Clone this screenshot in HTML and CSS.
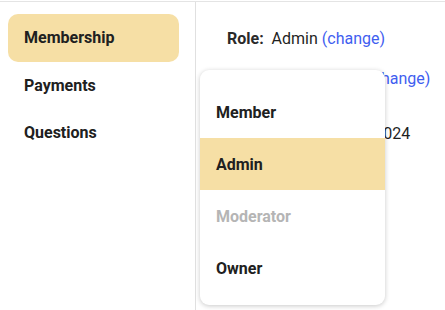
FILE: index.html
```html
<!DOCTYPE html>
<html lang="en">
<head>
    <meta charset="UTF-8">
    <meta name="viewport" content="width=device-width, initial-scale=1.0">
    <title>Membership</title>
    <link rel="stylesheet" href="styles.css">
</head>
<body>
    <div class="layout">
        <nav class="sidebar">
            <a class="nav-item active">Membership</a>
            <a class="nav-item">Payments</a>
            <a class="nav-item">Questions</a>
        </nav>

        <main class="content">
            <div class="field"><b>Role:</b>&nbsp; Admin <a class="link">(change)</a></div>
            <div class="field"><b>Type:</b>&nbsp; Full member <a class="link">(change)</a></div>
            <div class="field joined"><b>Joined:</b>&nbsp; January 12, 2024</div>

            <ul class="menu">
                <li class="menu-item">Member</li>
                <li class="menu-item selected">Admin</li>
                <li class="menu-item disabled">Moderator</li>
                <li class="menu-item">Owner</li>
            </ul>
        </main>
    </div>
</body>
</html>
```

FILE: styles.css
```css
body { margin: 0; padding-top: 1px; font-family: Roboto, "Liberation Sans", sans-serif; font-size: 16px; color: #1f1f1f; background: #fff; }
.layout { display: grid; grid-template-columns: 196px 1fr; border-top: 1px solid #e4e4e4; height: 308px; }
.sidebar { border-right: 1px solid #e0e0e0; padding: 12px 16px 0 8px; }
.nav-item { display: flex; align-items: center; height: 47.5px; padding-left: 16px; border-radius: 10px; font-weight: bold; color: #202020; }
.nav-item.active { background: #f6dfa5; }
.content { position: relative; padding: 16px 0 0 31px; }
.field { height: 40px; line-height: 42px; white-space: nowrap; }
.field.joined { margin-top: 15px; }
.field b { color: #2a2a2a; }
.link { color: #3f5ef0; }
.menu { position: absolute; left: 4px; top: 68px; width: 185px; margin: 0; padding: 16px 0 11px; list-style: none; background: #fff; border-radius: 9px; box-shadow: 0 1px 5px rgba(0, 0, 0, 0.22); }
.menu-item { height: 52px; display: flex; align-items: center; padding-left: 16px; font-weight: bold; color: #202020; }
.menu-item.selected { background: #f6dfa5; }
.menu-item.disabled { color: #b5b5b5; }
```
